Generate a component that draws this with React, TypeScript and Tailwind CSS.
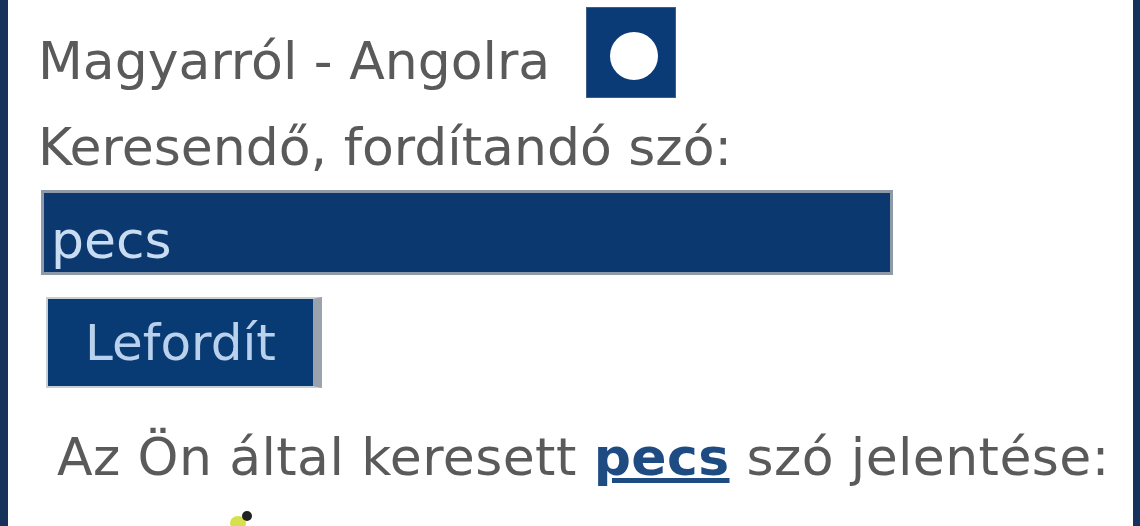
// Dictionary lookup box: direction toggle, search field, submit and result heading

const FONT = { fontFamily: '"DejaVu Sans", Verdana, sans-serif' };

export default function App() {
  return (
    <div
      className="w-[1140px] h-[526px] overflow-hidden bg-white border-l-[8px] border-r-[7px] border-[#17325a] pl-[30px] text-[52px] text-[#5a5a5a]"
      style={FONT}
    >
      {/* direction row */}
      <div className="flex items-start pt-[7px]">
        <span className="mt-[24px] leading-[60px] whitespace-nowrap">Magyarról - Angolra</span>
        <button className="ml-[36px] w-[90px] h-[91px] bg-[#0b3b76] flex items-center justify-center border border-[#3d5f8c]">
          <svg width="56" height="56" viewBox="0 0 56 56">
            <circle cx="31" cy="31" r="24" fill="#ffffff" />
          </svg>
        </button>
      </div>

      <div className="mt-[19px] leading-[60px] whitespace-nowrap">Keresendő, fordítandó szó:</div>

      {/* search field */}
      <div className="mt-[13px] ml-[3px] w-[852px] h-[85px] bg-[#0b396f] border-[3px] border-[#8f9aa8] pl-[7px] pt-[17px]">
        <div className="leading-[60px] text-[#c9dcf1]">pecs</div>
      </div>

      {/* submit */}
      <button className="mt-[22px] ml-[8px] w-[276px] h-[91px] bg-[#083a74] border-t-[2px] border-l-[2px] border-b-[2px] border-r-[9px] border-t-[#c7ced6] border-l-[#c7ced6] border-b-[#c7ced6] border-r-[#9aa3ad] flex items-center justify-center text-[50px] leading-[60px] text-[#b9d1ec]">
        Lefordít
      </button>

      <div className="mt-[39px] ml-[19px] leading-[60px] whitespace-nowrap tracking-[0.4px]">
        Az Ön által keresett{" "}
        <a href="#" className="font-bold text-[#1d4b82] underline">
          pecs
        </a>{" "}
        szó jelentése:
      </div>

      {/* flag icon peeking at the bottom */}
      <div className="mt-[18px] ml-[190px]">
        <svg width="30" height="24" viewBox="0 0 30 24">
          <ellipse cx="10" cy="18" rx="8" ry="7" fill="#d6e04a" />
          <circle cx="19" cy="11" r="5" fill="#222222" />
        </svg>
      </div>
    </div>
  );
}
